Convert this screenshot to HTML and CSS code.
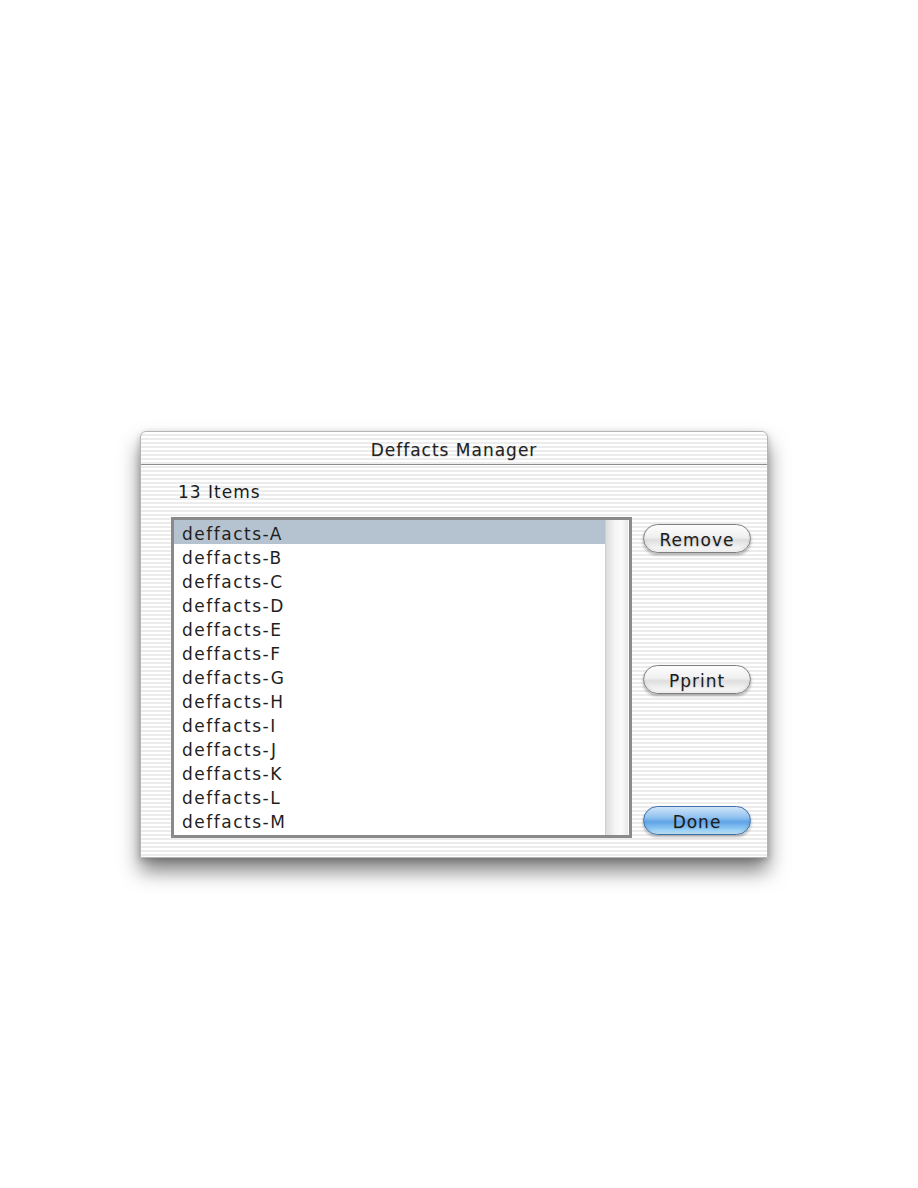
FILE: index.html
```html
<!DOCTYPE html>
<html lang="en">
<head>
  <meta charset="UTF-8" />
  <title>Deffacts Manager</title>
  <link rel="stylesheet" href="styles.css">
</head>
<body>

  <!-- Dialog window -->
  <div class="window">
    <div class="titlebar">Deffacts Manager</div>
    <div class="content">
      <div class="count">13 Items</div>
      <div class="main">
        <div class="listbox">
          <ul class="items">
            <li class="selected">deffacts-A</li>
            <li>deffacts-B</li>
            <li>deffacts-C</li>
            <li>deffacts-D</li>
            <li>deffacts-E</li>
            <li>deffacts-F</li>
            <li>deffacts-G</li>
            <li>deffacts-H</li>
            <li>deffacts-I</li>
            <li>deffacts-J</li>
            <li>deffacts-K</li>
            <li>deffacts-L</li>
            <li>deffacts-M</li>
          </ul>
          <div class="scrollbar"></div>
        </div>
        <div class="buttons">
          <button class="btn">Remove</button>
          <button class="btn">Pprint</button>
          <button class="btn default">Done</button>
        </div>
      </div>
    </div>
  </div>

</body>
</html>
```

FILE: styles.css
```css
* {
  box-sizing: border-box;
  margin: 0;
  padding: 0;
}

body {
  min-height: 1188px;
  background: #fff;
  font-family: "DejaVu Sans", "Liberation Sans", sans-serif;
  color: #1a1a1a;
  letter-spacing: 1px;
  padding-top: 431px;
}

/* Window */
.window {
  width: 628px;
  height: 427px;
  margin-left: 140px;
  border: 1px solid #b4b4b4;
  border-radius: 6px 6px 0 0;
  background: repeating-linear-gradient(to bottom, #ffffff 0, #ffffff 2px, #ececec 2px, #ececec 4px);
  box-shadow: 0 13px 20px rgba(0, 0, 0, 0.5), 0 2px 6px rgba(0, 0, 0, 0.2);
  display: flex;
  flex-direction: column;
}

.titlebar {
  height: 33px;
  padding-top: 4px;
  line-height: 29px;
  text-align: center;
  font-size: 17px;
  color: #222;
  border-bottom: 1px solid #8c8c8c;
  border-radius: 6px 6px 0 0;
  text-shadow: 0 1px 1px rgba(0, 0, 0, 0.15);
}

.content {
  padding: 17px 16px 0 30px;
}

.count {
  font-size: 17px;
  line-height: 20px;
  padding-left: 7px;
  margin-bottom: 15px;
}

.main {
  display: flex;
  gap: 11px;
}

/* List box */
.listbox {
  width: 461px;
  height: 321px;
  border: 3px solid #8a8a8a;
  background: #fff;
  display: flex;
  padding-right: 1px;
}

.items {
  list-style: none;
  flex: 1;
}

.items li {
  height: 24px;
  padding: 4px 0 0 8px;
  line-height: 20px;
  font-size: 17px;
  letter-spacing: 1.5px;
  color: #1f1f1f;
}

.items li.selected {
  background: #b5c2cf;
}

.scrollbar {
  width: 23px;
  background: linear-gradient(to right, #dcdcdc, #f4f4f4 40%, #fbfbfb 70%, #e8e8e8);
  border-left: 1px solid #cfcfcf;
}

/* Buttons */
.buttons {
  width: 108px;
  padding: 7px 0 3px;
  display: flex;
  flex-direction: column;
  justify-content: space-between;
}

.btn {
  height: 29px;
  padding-top: 3px;
  border-radius: 15px;
  border: 1px solid #7e7e7e;
  font-family: "DejaVu Sans", "Liberation Sans", sans-serif;
  font-size: 17px;
  letter-spacing: 1px;
  color: #1c1c1c;
  background: linear-gradient(to bottom, #fdfdfd 0%, #f0f0f0 45%, #dedede 55%, #f4f4f4 85%, #ffffff 100%);
  box-shadow: 0 2px 3px rgba(0, 0, 0, 0.3), inset 0 -2px 3px rgba(0, 0, 0, 0.08);
  text-shadow: 0 1px 1px rgba(0, 0, 0, 0.15);
}

.btn.default {
  border-color: #3f6ea8;
  background: linear-gradient(to bottom, #cfe5fa 0%, #8fc0ef 40%, #5fa3e6 55%, #8cc8f4 80%, #c6ecff 100%);
}
```
